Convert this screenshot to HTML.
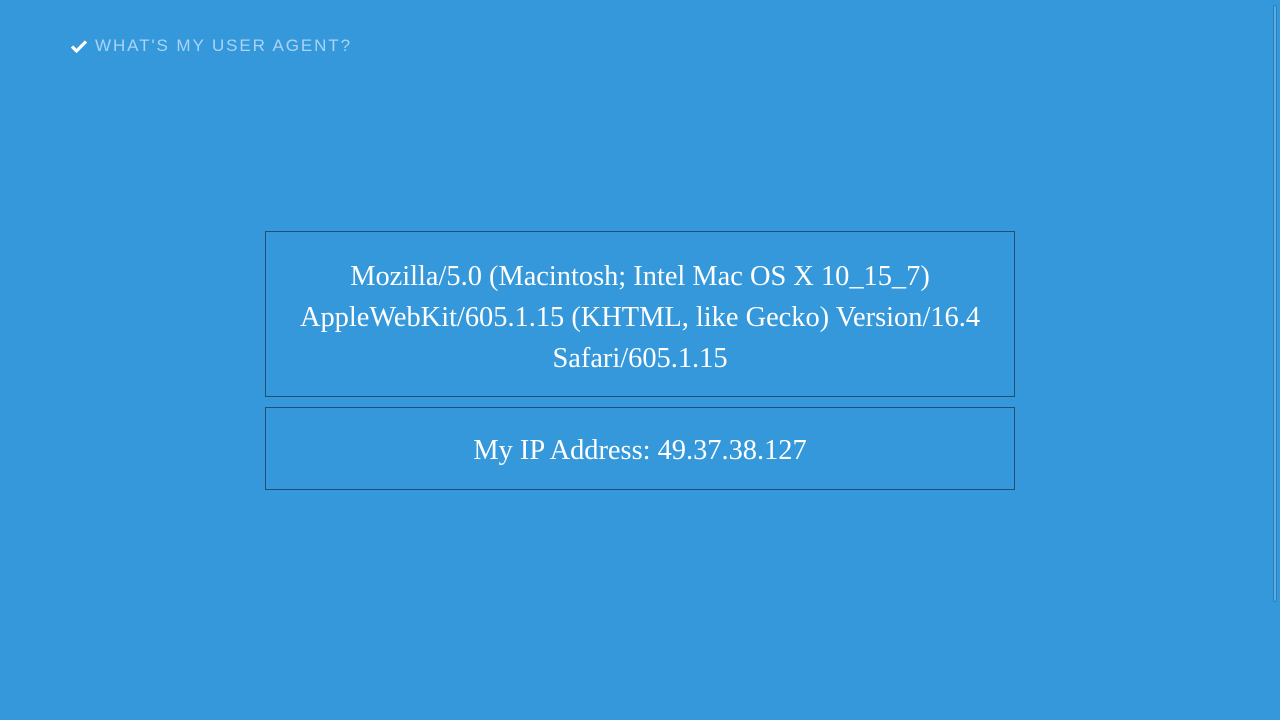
<!DOCTYPE html>
<html><head><meta charset="utf-8"><style>
html,body{margin:0;padding:0;width:1280px;height:720px;background:#3598db;overflow:hidden;font-family:"Liberation Serif",serif;}
.hdr{position:absolute;left:70px;top:36px;font-family:"Liberation Sans",sans-serif;font-size:17px;letter-spacing:1.9px;color:#a9d4f5;font-weight:300;display:flex;align-items:center;}
.hdr svg{margin-right:7px}
.box{position:absolute;left:265px;width:748px;border:1px solid #1f4f72;color:#fff;text-align:center;font-size:28.4px;box-sizing:content-box;}
.b1{top:231px;height:164px;}
.b1 div{padding-top:24px;line-height:41px;}
.b2{top:407px;height:81px;line-height:86px;}
.sb{position:absolute;left:1273px;top:5px;width:4px;height:597px;background:#5aaee6;border:1px solid #2a7dba;border-radius:2px;box-sizing:border-box;}
</style></head><body>
<div class="hdr"><svg width="18" height="14" viewBox="0 0 18 14"><path d="M2 7.5 L6.5 12 L16 2.5" stroke="#fff" stroke-width="3.2" fill="none"/></svg>WHAT'S MY USER AGENT?</div>
<div class="box b1"><div>Mozilla/5.0 (Macintosh; Intel Mac OS X 10_15_7)<br>AppleWebKit/605.1.15 (KHTML, like Gecko) Version/16.4<br>Safari/605.1.15</div></div>
<div class="box b2">My IP Address: 49.37.38.127</div>
<div class="sb"></div>
</body></html>
